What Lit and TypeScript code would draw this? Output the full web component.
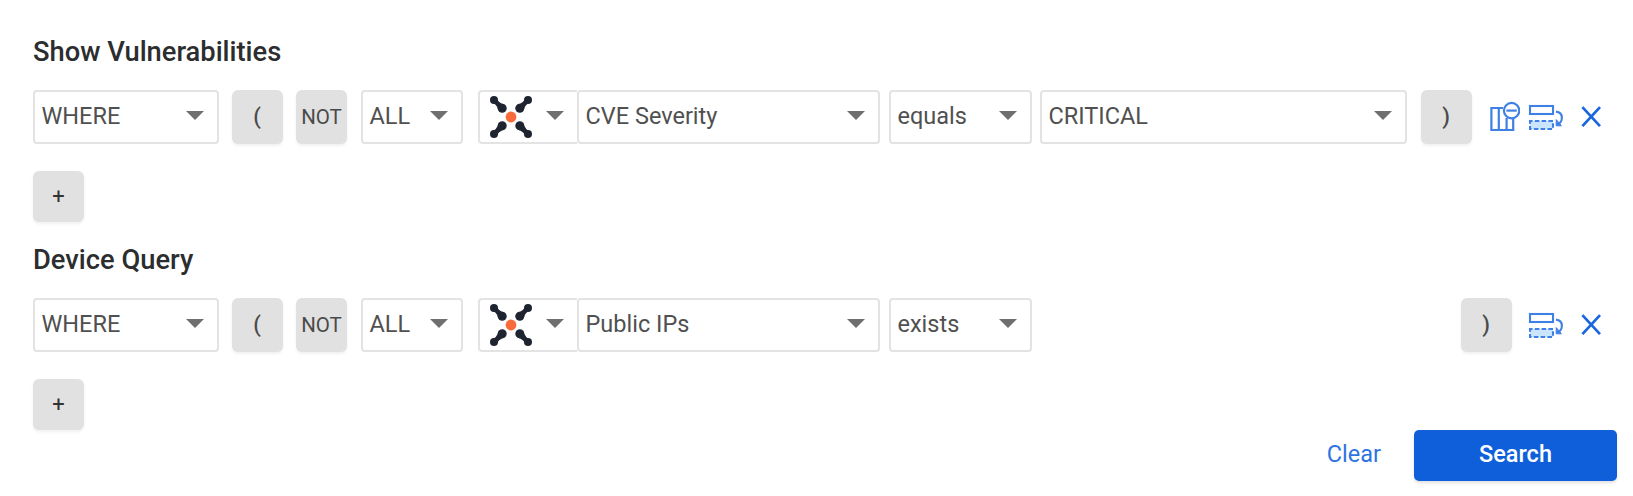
import { LitElement, html, css, svg, nothing } from "lit";
import { customElement, property } from "lit/decorators.js";

const logo = html`<svg class="logo" width="44" height="44" viewBox="0 0 44 44">
  ${[0, 90, 180, 270].map(
    (a) => svg`<g transform="rotate(${a} 22 22)" fill="#1e2430">
      <circle cx="5" cy="5" r="4"/><circle cx="13.2" cy="13.2" r="4.5"/>
      <path d="M7.6 3Q9 7.6 15.4 9.6L9.6 15.4Q7.6 9 3 7.6Z"/></g>`
  )}
  <circle cx="22" cy="22" r="5.4" fill="#f96a3a"/>
</svg>`;

const columnsIcon = html`<svg width="32" height="32" viewBox="0 0 32 32" fill="none" stroke="#3f80e4" stroke-width="2.2">
  <path d="M15 7H3.4V29H25.2V18M10.8 7V29M18.6 17V29"/>
  <circle cx="23.6" cy="9.6" r="7.7" fill="#fff"/>
  <path d="M18.4 9.6H28.8"/>
</svg>`;

const swapIcon = html`<svg width="36" height="28" viewBox="0 0 36 28" fill="none" stroke="#3f80e4" stroke-width="2.1">
  <rect x="2" y="3" width="23" height="8"/>
  <rect x="2" y="18" width="23" height="8" fill="#cce5ff" stroke-dasharray="4.6 2.2" stroke-dashoffset="2"/>
  <path d="M28 8.6C35.6 9.4 35.6 18.6 29.2 22"/>
  <path d="M28.2 16.6V22.8H33.4L28.2 16.6Z" fill="#3f80e4" stroke-width="1"/>
</svg>`;

const closeIcon = html`<svg width="22" height="22" viewBox="0 0 22 22" fill="none" stroke="#1a66dc" stroke-width="2.7">
  <path d="M1.4 1.2L19 20.2M19 1.2L1.4 20.2"/>
</svg>`;

@customElement("query-select")
export class QuerySelect extends LitElement {
  @property() value = "";
  @property({ type: Boolean }) brand = false;
  static styles = css`
    :host {
      display: flex;
      align-items: center;
      justify-content: space-between;
      box-sizing: border-box;
      height: 54px;
      flex: none;
      border: 2px solid #e3e3e3;
      border-radius: 4px;
      background: #fff;
      padding: 0 13.5px 0 6.5px;
    }
    :host([brand]) { padding-left: 9px; border-right: 0; border-radius: 4px 0 0 4px; }
    .label { white-space: nowrap; line-height: 28px; padding-bottom: 2px; }
    .arrow { flex: none; margin-bottom: 4px; }
    .logo { flex: none; }
  `;
  render() {
    return html`${this.brand ? logo : html`<span class="label">${this.value}</span>`}
      <svg class="arrow" width="18" height="9" viewBox="0 0 18 9"><path d="M0 0H18L9 9Z" fill="#6f6f6f"/></svg>`;
  }
}

interface Clause {
  title: string;
  field: string;
  op: string;
  value?: string;
}

@customElement("query-section")
export class QuerySection extends LitElement {
  @property({ attribute: false }) clause!: Clause;
  static styles = css`
    :host { display: block; height: 208px; }
    .title {
      margin: 0;
      height: 30px;
      line-height: 29px;
      font-size: 27.3px;
      font-weight: 500;
      color: #2b2d2f;
    }
    .row { display: flex; align-items: center; margin-top: 22px; height: 54px; }
    .btn {
      display: flex;
      align-items: center;
      justify-content: center;
      box-sizing: border-box;
      flex: none;
      width: 51px;
      height: 54px;
      padding: 0 1px 2px 0;
      border: 0;
      border-radius: 6px;
      background: #e1e1e1;
      box-shadow: 0 2px 3px rgba(0, 0, 0, 0.06);
      font: 500 22px Roboto, sans-serif;
      color: #4a4a4a;
    }
    .not { font-size: 20.5px; font-weight: 400; padding: 0; }
    .add { height: 51px; margin-top: 27px; font-weight: 400; color: #333; padding: 0; }
    .where { width: 186px; margin-right: 13px; }
    .open { margin-right: 13px; }
    .all { width: 102px; margin: 0 15px 0 14px; }
    .source { width: 99px; }
    .field { width: 303px; }
    .op { width: 143px; margin: 0 8px 0 9px; }
    .value { width: 367px; }
    .tail { display: flex; align-items: center; margin-left: auto; height: 54px; }
    .tail svg { flex: none; }
    .columns { display: flex; margin-right: 8px; }
    .swap { display: flex; margin-right: 17px; }
    .close { display: flex; }
    .tail .btn { margin-right: 16px; }
  `;
  render() {
    const c = this.clause;
    return html`
      <h2 class="title">${c.title}</h2>
      <div class="row">
        <query-select class="where" value="WHERE"></query-select>
        <button class="btn open">(</button>
        <button class="btn not">NOT</button>
        <query-select class="all" value="ALL"></query-select>
        <query-select class="source" brand></query-select>
        <query-select class="field" value=${c.field}></query-select>
        <query-select class="op" value=${c.op}></query-select>
        ${c.value ? html`<query-select class="value" value=${c.value}></query-select>` : nothing}
        <div class="tail">
          <button class="btn">)</button>
          ${c.value ? html`<span class="columns">${columnsIcon}</span>` : nothing}
          <span class="swap">${swapIcon}</span>
          <span class="close">${closeIcon}</span>
        </div>
      </div>
      <button class="btn add">+</button>
    `;
  }
}

@customElement("app-root")
export class AppRoot extends LitElement {
  static styles = css`
    :host {
      display: flow-root;
      box-sizing: border-box;
      height: 496px;
      overflow: hidden;
      padding: 38px 30px 0 33px;
      background: #fff;
      font: 400 23.5px Roboto, sans-serif;
      color: #505050;
    }
    .actions {
      display: flex;
      justify-content: flex-end;
      align-items: center;
      height: 51px;
      margin: -24px -14px 0 0;
    }
    .clear, .search { border: 0; padding: 0; font: 400 23.5px Roboto, sans-serif; }
    .clear { background: none; color: #2e74df; margin-right: 33px; padding-bottom: 3px; }
    .search {
      width: 203px;
      height: 51px;
      padding-bottom: 3px;
      border-radius: 5px;
      background: #0f5fdb;
      box-shadow: 0 2px 3px rgba(0, 0, 0, 0.12);
      color: #fff;
      font-weight: 500;
    }
  `;
  private clauses: Clause[] = [
    { title: "Show Vulnerabilities", field: "CVE Severity", op: "equals", value: "CRITICAL" },
    { title: "Device Query", field: "Public IPs", op: "exists" },
  ];
  render() {
    return html`
      ${this.clauses.map((c) => html`<query-section .clause=${c}></query-section>`)}
      <div class="actions">
        <button class="clear">Clear</button>
        <button class="search">Search</button>
      </div>
    `;
  }
}
